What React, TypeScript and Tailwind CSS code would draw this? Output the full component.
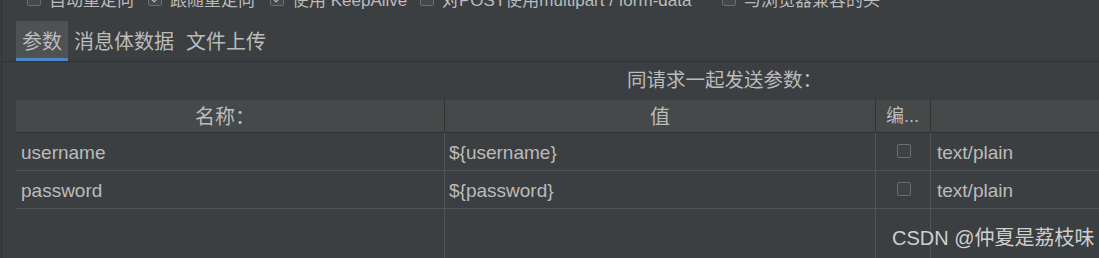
import { Check } from "lucide-react";

const options = [
  { label: "自动重定向", checked: false, w: "w-[86px]" },
  { label: "跟随重定向", checked: true, w: "w-[87px]" },
  { label: "使用 KeepAlive", checked: true, w: "w-[115px]" },
  { label: "对POST使用multipart / form-data", checked: false, w: "w-[267px]" },
  { label: "与浏览器兼容的头", checked: false, w: "w-auto" },
];

const tabs = ["参数", "消息体数据", "文件上传"];

const params = [
  { name: "username", value: "${username}", type: "text/plain" },
  { name: "password", value: "${password}", type: "text/plain" },
];

const cols = "grid grid-cols-[429px_431px_55px_168px]";

function OptionBox({ checked }: { checked: boolean }) {
  return (
    <span className="w-[14px] h-[14px] shrink-0 rounded-[2px] border border-[#6b6e70] bg-[#43494a] flex items-center justify-center">
      {checked && <Check size={11} strokeWidth={2.5} className="text-[#bbbbbb]" />}
    </span>
  );
}

export default function App() {
  return (
    <div className="relative w-[1099px] h-[258px] overflow-hidden bg-[#3c3f41] text-[#bbbbbb] font-['Liberation_Sans','Noto_Sans_CJK_SC',sans-serif]">
      <div className="ml-px h-full border-l border-[#303234] flex flex-col">
        {/* option strip, cut off by the top edge as in the panel above */}
        <div className="-mt-[8px] h-[18px] flex items-start pl-[25px] text-[17px] leading-[18px]">
          {options.map((o) => (
            <div key={o.label} className="flex items-start mr-[13px]">
              <OptionBox checked={o.checked} />
              <span className={`ml-[8px] whitespace-nowrap ${o.w}`}>{o.label}</span>
            </div>
          ))}
        </div>

        <div className="mt-[11px] flex pl-[14px] border-b border-[#323232] text-[20px]">
          {tabs.map((t, i) => (
            <div
              key={t}
              className={
                i === 0
                  ? "h-[40px] px-[6px] pt-[4px] flex items-center bg-[#4e5254] border-b-[3px] border-[#4a88c7]"
                  : "h-[40px] px-[6px] pt-[4px] flex items-center border-b-[3px] border-transparent"
              }
            >
              {t}
            </div>
          ))}
        </div>

        <div className="h-[38px] flex items-center pl-[625px] text-[19.5px]">同请求一起发送参数：</div>

        <div className="flex-1 flex flex-col pl-[14px]">
          <div className={`${cols} h-[33px] bg-[#45494a] border-b border-[#323232] text-[20px]`}>
            <div className="flex items-center justify-center border-r border-[#323232] pr-[10px] pt-px">名称：</div>
            <div className="flex items-center justify-center border-r border-[#323232] pt-px">值</div>
            <div className="flex items-center pl-[10px] border-r border-[#323232] text-[18px] whitespace-nowrap overflow-hidden pt-px">编...</div>
            <div />
          </div>

          {params.map((p) => (
            <div key={p.name} className={`${cols} h-[38px] border-b border-[#515456] text-[19px]`}>
              <div className="flex items-center pl-[5px] pt-[3px] border-r border-[#515456]">{p.name}</div>
              <div className="flex items-center pl-[4px] pt-[3px] border-r border-[#515456]">{p.value}</div>
              <div className="flex items-center justify-center border-r border-[#515456]">
                <span className="w-[14px] h-[14px] ml-px mb-[2px] rounded-[2px] border border-[#6a6d6f] bg-[#3f4244]" />
              </div>
              <div className="flex items-center pl-[6px] pt-[3px]">{p.type}</div>
            </div>
          ))}

          <div className={`${cols} flex-1`}>
            <div className="border-r border-[#515456]" />
            <div className="border-r border-[#515456]" />
            <div className="border-r border-[#515456]" />
            <div />
          </div>
        </div>
      </div>

      <div className="absolute left-[892px] top-[226px] text-[20px] leading-[24px] text-[#cfcfcf] whitespace-nowrap">
        CSDN @仲夏是荔枝味
      </div>
    </div>
  );
}
